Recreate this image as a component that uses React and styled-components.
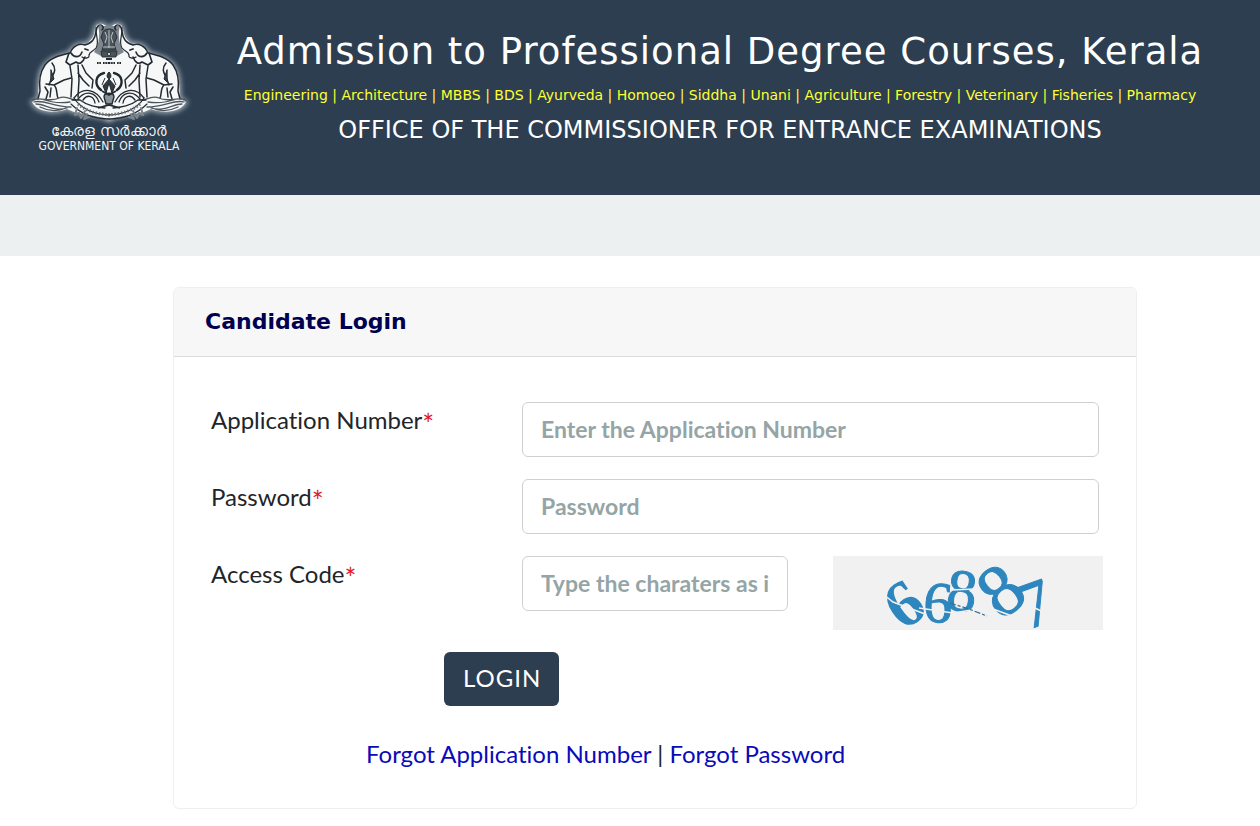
import React from "react";
import styled, { createGlobalStyle } from "styled-components";

const navy = "#2c3e50";
const verdana = `Verdana, "DejaVu Sans", sans-serif`;
const lato = `Lato, "Liberation Sans", sans-serif`;

const GlobalStyle = createGlobalStyle`
  *, *::before, *::after { box-sizing: border-box; }
  body {
    margin: 0;
    background: #fff;
    color: #212529;
    font-family: ${lato};
    font-size: 24px;
    line-height: 36px;
    font-variant-ligatures: none;
  }
  h1, h2, p { margin: 0; font-weight: 400; }
`;

const Header = styled.header`
  display: flex;
  align-items: flex-start;
  gap: 18px;
  min-height: 195px;
  padding: 20px 28px;
  background: ${navy};
  color: #fff;
`;

const Logo = styled.div`
  flex: 0 0 162px;
  text-align: center;
  white-space: nowrap;
`;

const EmblemSvg = styled.svg`
  display: block;
  width: 162px;
  height: 104px;
  overflow: visible;
`;

const LogoLine = styled.p`
  font-family: ${(p) => (p.$local ? `"DejaVu Sans", sans-serif` : `Tahoma, "DejaVu Sans Condensed", sans-serif`)};
  font-size: ${(p) => (p.$local ? 15 : 12)}px;
  line-height: 15px;
  color: #f1f4f6;
`;

const Titles = styled.div`
  flex: 1;
  min-width: 0;
  padding-top: 8px;
  text-align: center;
  font-family: ${verdana};
`;

const Title = styled.h1`
  font-size: 37px;
  line-height: 48px;
  letter-spacing: 1px;
`;

const Courses = styled.p`
  margin: 7px 0;
  font-size: 14px;
  line-height: 24px;
  color: #ffff33;
`;

const Office = styled.p`
  font-size: 24px;
  line-height: 32px;
`;

const Strip = styled.nav`
  height: 61px;
  background: #ecf0f1;
`;

const Main = styled.main`
  padding: 31px 123px 17px 173px;
`;

const Card = styled.section`
  border: 1px solid #efefef;
  border-radius: 6px;
  overflow: hidden;
`;

const CardHeader = styled.header`
  padding: 16px 31px;
  background: #f7f7f7;
  border-bottom: 1px solid #d9dbdc;
`;

const CardTitle = styled.h2`
  font-family: ${verdana};
  font-size: 22px;
  font-weight: 700;
  line-height: 36px;
  color: #000050;
`;

const Form = styled.form`
  display: flex;
  flex-direction: column;
  gap: 22px;
  padding: 45px 33px 36px 37px;
`;

const Row = styled.div`
  display: grid;
  grid-template-columns: 311fr 581fr;
`;

const Label = styled.label``;

const Required = styled.span`
  color: #e01b24;
  font-size: 28px;
  line-height: 1;
  vertical-align: bottom;
`;

const Field = styled.div`
  padding-right: 4px;
`;

const CodeField = styled.div`
  display: grid;
  grid-template-columns: 266fr 270fr;
  gap: 45px;
`;

const Input = styled.input`
  display: block;
  width: 100%;
  height: 55px;
  padding: 0 18px 2px;
  border: 1px solid #ced0d2;
  border-radius: 6px;
  background: #fff;
  color: #495057;
  font-family: ${lato};
  font-size: 23px;
  font-weight: 700;
  font-variant-ligatures: none;
  &::placeholder {
    color: #95a5a6;
    opacity: 1;
  }
`;

const CaptchaSvg = styled.svg`
  display: block;
  width: 100%;
  height: 74px;
  overflow: visible;
  background: #f1f1f1;
`;

const Actions = styled.div`
  padding-left: 233px;
`;

const Button = styled.button`
  display: block;
  height: 54px;
  padding: 0 18px 3px 19px;
  border: 0;
  border-radius: 6px;
  background: ${navy};
  color: #fff;
  font-family: ${lato};
  font-size: 24px;
  letter-spacing: 1px;
  cursor: pointer;
`;

const Links = styled.p`
  padding: 8px 0 0 155px;
`;

const Link = styled.a`
  color: #0a0ab8;
  text-decoration: none;
`;

const ELEPHANT =
  "M81 12 C79 3 70 1 67 8 C67 15 64 20 58 24 C52 22 45 26 41 33 C32 35 22 38 16 46 C10 54 11 65 10 79 L4 82 C9 92 25 94 39 89 L46 92 L82 99 Z";

const Half = () => (
  <g fill="none" stroke="#222a31" strokeLinecap="round" strokeLinejoin="round">
    <path d="M74 10 C77 7 73 3 70 6 C67 9 69 15 65 20 C63 23 60 24 57 25 C51 23 45 26 42 33 C34 35 23 37 17 45 C12 52 11 63 12 71 L10 79" strokeWidth="1.5" />
    <path d="M68 7 C67 15 72 22 68 28 C65 32 62 31 61 35 C62 38 57 39 54 37" strokeWidth="1.2" />
    <path d="M41 33 L38 42 L42 45 L48 42 C52 45 55 42 57 37 M43 33 C46 38 52 38 54 32" strokeWidth="1.6" />
    <path d="M57 29 L60 30" strokeWidth="1.8" />
    <path d="M42 46 L44 59 L43 77 M50 45 L51 60 L50 77 M54 45 L58 53 L65 60 L64 68 M50 53 L55 60 L61 66" strokeWidth="1.5" />
    <path d="M24 43 C29 49 26 53 24 57 L21 65 M18 64 L26 65 L36 60 L43 58 M26 65 C30 69 28 74 30 78 M17 67 L20 72 L18 79 M23 68 L22 77" strokeWidth="1.5" />
    <path d="M23 50 L26 59 L23 62 Z" fill="#39424a" strokeWidth="1" />
    <path d="M4 80 C12 76 22 83 31 78 C38 75 44 80 48 80 M6 82 C16 79 25 87 43 87 M8 84 C17 84 26 92 39 88 M13 79 C22 82 30 84 42 82 M12 87 C20 91 29 92 38 88" stroke="#4c555d" strokeWidth="1.3" />
    <path d="M46 78 C55 66 68 69 75 82 M50 79 C58 69 68 73 71 82 M55 80 C60 73 66 77 67 83 M44 80 L52 80 C60 86 68 87 77 88" strokeWidth="1.3" />
    <path d="M46 78 C52 88 66 95 82 95 M43 84 C52 93 65 99 82 99" strokeWidth="1.1" />
    <path d="M50 84 C58 91 69 94 82 95" stroke="#6b737a" strokeWidth="3" strokeDasharray="1.5 1.8" strokeLinecap="butt" />
    <path d="M49 88 L47 95 L51 93 L53 98 L57 91 M59 94 L56 99 L61 97" stroke="#7c858d" strokeWidth="2" />
    <path d="M76 53 C67 55 66 65 73 70" strokeWidth="2.4" />
    <path d="M69 43 L73 43 M75 43 L81 43" strokeWidth="2.2" strokeDasharray="1.6 .7" strokeLinecap="butt" />
  </g>
);

const SIDES = ["", "translate(162 0) scale(-1 1)"];

const Emblem = () => (
  <EmblemSvg viewBox="0 0 162 104" role="img" aria-label="Government of Kerala emblem">
    <defs>
      <filter id="glow" x="-20%" y="-20%" width="140%" height="140%">
        <feGaussianBlur stdDeviation="2.4" />
      </filter>
    </defs>
    {SIDES.map((t) => (
      <path key={"g" + t} d={ELEPHANT} transform={t} fill="#fff" stroke="#dfe4e8" strokeWidth="4" opacity=".6" filter="url(#glow)" />
    ))}
    {SIDES.map((t) => (
      <path key={"w" + t} d={ELEPHANT} transform={t} fill="#f6f7f7" />
    ))}
    <path d="M70 6 C73 16 70 27 66 32 L73 36 L89 36 L96 32 C92 27 89 16 92 6 Z" fill="#7d868e" />
    {SIDES.map((t) => (
      <g key={"d" + t} transform={t}><Half /></g>
    ))}
    <g fill="#4b535a" stroke="#242b31" strokeWidth=".9">
      <path d="M75 12 C76 8 86 8 87 12 L89 17 L86 24 L88 30 H74 L76 24 L73 17 Z" />
      <path d="M73 31 H89 L88 37 H74 Z" />
      <path d="M78 39 H84" strokeWidth="2" />
      <path d="M77 12 L79 17 L77 23 M81 10 V28 M85 12 L83 17 L85 23 M75 27 H87" fill="none" stroke="#c6cdd2" />
      <circle cx="81" cy="34" r="1.6" fill="#dfe3e6" />
    </g>
    <path d="M81 52 C78 55 79 58 81 59 C83 58 84 55 81 52 M81 59 L75 66 L78 73 L81 63 L84 73 L87 66 Z M77 58 L74 65 M85 58 L88 65" fill="#333b42" stroke="#222a31" />
    <path d="M76 77 C76 72 86 72 86 77 L84 84 H78 Z" fill="#89929a" stroke="#222a31" strokeWidth="1.4" />
    <path d="M74 71 L81 75 L88 71 M70 88 L81 85 L92 88" fill="none" stroke="#222a31" strokeWidth="1.8" />
  </EmblemSvg>
);

const DIGITS = [
  { d: "6", x: 71, y: 48, size: 66, angle: -34, weight: 700 },
  { d: "6", x: 105, y: 47, size: 58, angle: 4, weight: 400 },
  { d: "8", x: 129, y: 35, size: 60, angle: 6, weight: 400 },
  { d: "8", x: 168, y: 35, size: 74, angle: -38, weight: 400 },
  { d: "7", x: 202, y: 48, size: 66, angle: -20, weight: 400 },
];

const Captcha = () => (
  <CaptchaSvg viewBox="0 0 270 74" role="img" aria-label="Access code image">
    {DIGITS.map(({ d, x, y, size, angle, weight }) => (
      <text
        key={x}
        x={x}
        y={y + Math.round(size * 0.33)}
        transform={`rotate(${angle} ${x} ${y})`}
        textAnchor="middle"
        fontFamily={`"Liberation Serif", serif`}
        fontSize={size}
        fontWeight={weight}
        fill="#2e86be"
        stroke="#2e86be"
        strokeWidth={weight === 400 ? 1 : 0}
      >
        {d}
      </text>
    ))}
    <g fill="none" stroke="#f1f1f1" strokeWidth="1.5">
      <path d="M50 38 L60 46 L92 58 M86 52 L120 57 L145 53 M78 25 L84 30 M118 34 L142 33 M145 43 L160 53 L190 64 M202 52 L214 58" />
    </g>
    <path d="M117 47 L136 53 L154 60" fill="none" stroke="#3b6f91" strokeWidth="1.2" strokeDasharray="6 2 3 2" />
  </CaptchaSvg>
);

const FieldLabel = ({ id, children }) => (
  <Label htmlFor={id}>
    {children}
    <Required>*</Required>
  </Label>
);

export default function App() {
  return (
    <>
      <GlobalStyle />
      <Header>
        <Logo>
          <Emblem />
          <LogoLine $local lang="ml">കേരള സർക്കാർ</LogoLine>
          <LogoLine>GOVERNMENT OF KERALA</LogoLine>
        </Logo>
        <Titles>
          <Title>Admission to Professional Degree Courses, Kerala</Title>
          <Courses>
            Engineering | Architecture | MBBS | BDS | Ayurveda | Homoeo | Siddha | Unani | Agriculture | Forestry | Veterinary | Fisheries | Pharmacy
          </Courses>
          <Office>OFFICE OF THE COMMISSIONER FOR ENTRANCE EXAMINATIONS</Office>
        </Titles>
      </Header>
      <Strip />
      <Main>
        <Card>
          <CardHeader>
            <CardTitle>Candidate Login</CardTitle>
          </CardHeader>
          <Form onSubmit={(e) => e.preventDefault()}>
            <Row>
              <FieldLabel id="application">Application Number</FieldLabel>
              <Field>
                <Input id="application" type="text" placeholder="Enter the Application Number" />
              </Field>
            </Row>
            <Row>
              <FieldLabel id="password">Password</FieldLabel>
              <Field>
                <Input id="password" type="password" placeholder="Password" />
              </Field>
            </Row>
            <Row>
              <FieldLabel id="code">Access Code</FieldLabel>
              <CodeField>
                <Input id="code" type="text" placeholder="Type the charaters as in the picture" />
                <Captcha />
              </CodeField>
            </Row>
            <Actions>
              <Button type="submit">LOGIN</Button>
            </Actions>
            <Links>
              <Link href="#application">Forgot Application Number</Link> | <Link href="#password">Forgot Password</Link>
            </Links>
          </Form>
        </Card>
      </Main>
    </>
  );
}
